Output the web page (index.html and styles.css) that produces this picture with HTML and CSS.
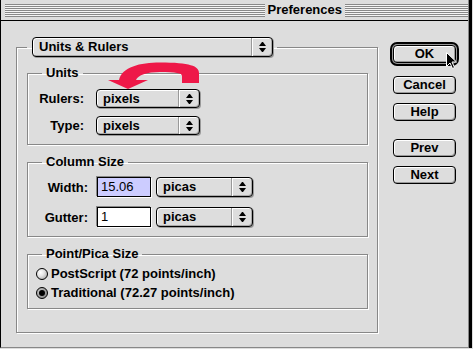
FILE: index.html
```html
<!DOCTYPE html>
<html lang="en">
<head>
  <meta charset="UTF-8">
  <title>Preferences</title>
  <link rel="stylesheet" href="styles.css">
</head>
<body>

  <div class="window">
    <div class="titlebar">
      <div class="stripes"></div>
      <span class="title">Preferences</span>
      <div class="stripes stripes-right"></div>
    </div>

    <div class="content">
      <fieldset class="panel">
        <legend class="panel-legend">
          <div class="popup popup-section">
            <span class="popup-label">Units &amp; Rulers</span>
            <span class="popup-arrows"><i class="tri-up"></i><i class="tri-down"></i></span>
          </div>
        </legend>

        <fieldset class="group group-units">
          <legend>Units</legend>
          <div class="row">
            <label class="row-label">Rulers:</label>
            <div class="popup popup-unit">
              <span class="popup-label">pixels</span>
              <span class="popup-arrows"><i class="tri-up"></i><i class="tri-down"></i></span>
            </div>
          </div>
          <div class="row">
            <label class="row-label">Type:</label>
            <div class="popup popup-unit">
              <span class="popup-label">pixels</span>
              <span class="popup-arrows"><i class="tri-up"></i><i class="tri-down"></i></span>
            </div>
          </div>
        </fieldset>

        <fieldset class="group group-columns">
          <legend>Column Size</legend>
          <div class="row">
            <label class="row-label col-label">Width:</label>
            <div class="field field-selected">15.06</div>
            <div class="popup popup-picas">
              <span class="popup-label">picas</span>
              <span class="popup-arrows"><i class="tri-up"></i><i class="tri-down"></i></span>
            </div>
          </div>
          <div class="row">
            <label class="row-label col-label">Gutter:</label>
            <div class="field">1</div>
            <div class="popup popup-picas">
              <span class="popup-label">picas</span>
              <span class="popup-arrows"><i class="tri-up"></i><i class="tri-down"></i></span>
            </div>
          </div>
        </fieldset>

        <fieldset class="group group-points">
          <legend>Point/Pica Size</legend>
          <div class="radio-row">
            <span class="radio"></span>
            <span>PostScript (72 points/inch)</span>
          </div>
          <div class="radio-row">
            <span class="radio checked"></span>
            <span>Traditional (72.27 points/inch)</span>
          </div>
        </fieldset>
      </fieldset>

      <div class="buttons">
        <div class="btn btn-default">OK</div>
        <div class="btn btn-cancel">Cancel</div>
        <div class="btn btn-help">Help</div>
        <div class="btn btn-prev">Prev</div>
        <div class="btn btn-next">Next</div>
      </div>
    </div>

    <!-- red hint arrow over the Units group -->
    <svg class="swoosh" width="105" height="35" viewBox="100 58 105 35">
      <path d="M182 83 L199 83 L199 73 C199 66 190 62.5 160 62.5 C140 62.5 122 67 119 80 L108 80 L128 89 L148 80 L136 80 C138 75 147 72 160 72 C176 72 182 73 182 76 Z" fill="#ee1848"/>
    </svg>

    <svg class="cursor" width="12" height="18" viewBox="0 0 12 18">
      <path d="M0.5 0.5 L0.5 14.5 L4 11 L6.5 16.5 L8.5 15.5 L6 10 L10.5 10 Z" fill="#000" stroke="#fff" stroke-width="1"/>
    </svg>
  </div>

</body>
</html>
```

FILE: styles.css
```css
html, body {
  margin: 0;
  background-color: #dddddd;
}

body {
  font-family: "Liberation Sans", Arial, sans-serif;
  font-size: 13px;
  font-weight: bold;
  color: #000;
}

.window {
  position: relative;
  width: 469px;
  height: 348px;
  box-sizing: border-box;
  background-color: #dddddd;
  border-left: 1px solid #000;
  border-right: 1px solid #888;
  border-bottom: 1px solid #888;
  box-shadow: 3px 0 0 #000;
}

/* title bar */
.titlebar {
  display: flex;
  height: 21px;
  box-sizing: border-box;
  padding: 4px 0 0 4px;
  border-bottom: 1px solid #000;
  background-color: #dddddd;
}

.stripes {
  flex: 1;
  height: 13px;
  background: repeating-linear-gradient(#888 0 1px, #f4f4f4 1px 2px);
}

.stripes-right {
  flex: none;
  width: 123px;
}

.title {
  margin: -3px 3px 0 3px;
  line-height: 17px;
  font-size: 13px;
}

/* main area */
.content {
  display: flex;
  align-items: flex-start;
  padding: 16px 0 0 15px;
}

fieldset {
  margin: 0;
  min-width: 0;
  box-sizing: border-box;
  border: 1px solid #888;
  box-shadow: 1px 1px 0 #fff, inset 1px 1px 0 #fff;
}

legend {
  padding: 0 4px;
}

.panel {
  width: 362px;
  padding: 8px 9px 23px 10px;
}

.panel-legend {
  padding: 0 4px 0 5px;
}

.group {
  width: 341px;
  padding: 0 0 9px 8px;
  margin-bottom: 9px;
}

.group legend {
  margin-left: 6px;
  line-height: 16px;
}

.group-units .row:first-of-type {
  margin-top: 8px;
}

.group-units .row + .row {
  margin-top: 8px;
}

.group-columns .row {
  height: 20px;
}

.group-columns .row:first-of-type {
  margin-top: 7px;
}

.group-columns .row + .row {
  margin-top: 10px;
}

.group-points {
  margin-bottom: 0;
  padding-top: 2px;
  padding-bottom: 6px;
}

.row {
  display: flex;
  align-items: center;
}

.row-label {
  width: 48px;
  margin-right: 12px;
  text-align: right;
}

.col-label {
  width: 52px;
  margin-right: 9px;
}

/* popup menus */
.popup {
  display: flex;
  height: 19px;
  box-sizing: border-box;
  border: 1px solid #000;
  border-radius: 4px;
  background-color: #dddddd;
  box-shadow: inset 1px 1px 0 #fff, inset -1px -1px 0 #aaa, 1px 1px 0 #999;
}

.popup-section {
  width: 241px;
  height: 20px;
}

.popup-unit {
  width: 104px;
}

.popup-picas {
  width: 97px;
  height: 20px;
  margin-left: 5px;
}

.popup-label {
  flex: 1;
  padding-left: 6px;
  line-height: 17px;
  white-space: nowrap;
}

.popup-section .popup-label {
  line-height: 18px;
}

.popup-arrows {
  width: 20px;
  display: flex;
  flex-direction: column;
  align-items: center;
  justify-content: center;
  gap: 2px;
  border-left: 1px solid #999;
  box-shadow: inset 1px 0 0 #fff;
}

.tri-up,
.tri-down {
  width: 1px;
  height: 0;
  border-left: 3px solid transparent;
  border-right: 3px solid transparent;
}

.tri-up {
  border-bottom: 4px solid #000;
}

.tri-down {
  border-top: 4px solid #000;
}

/* text fields */
.field {
  width: 54px;
  height: 20px;
  box-sizing: border-box;
  padding-left: 3px;
  border: 1px solid #000;
  background-color: #fff;
  box-shadow: -1px -1px 0 #888, 1px 1px 0 #fff;
  font-weight: normal;
  line-height: 18px;
}

.field-selected {
  background-color: #ccccff;
}

/* radio buttons */
.radio-row {
  display: flex;
  align-items: center;
  height: 19px;
  gap: 3px;
}

.radio {
  position: relative;
  width: 12px;
  height: 12px;
  box-sizing: border-box;
  border: 1px solid #000;
  border-radius: 50%;
  background: radial-gradient(circle at 35% 35%, #fff 0, #e4e4e4 40%, #999 100%);
}

.radio.checked {
  background: radial-gradient(circle at 35% 35%, #ccc 0, #777 100%);
}

.radio.checked::after {
  content: "";
  position: absolute;
  left: 2px;
  top: 2px;
  width: 6px;
  height: 6px;
  border-radius: 50%;
  background-color: #000;
}

/* dialog buttons */
.buttons {
  display: flex;
  flex-direction: column;
  margin: 8px 0 0 15px;
}

.btn {
  width: 63px;
  height: 18px;
  box-sizing: border-box;
  border: 1px solid #000;
  border-radius: 4px;
  background-color: #dddddd;
  box-shadow: inset 1px 1px 0 #fff, inset -1px -1px 0 #999;
  text-align: center;
  line-height: 16px;
}

.btn-default {
  box-shadow: inset 1px 1px 0 #fff, inset -1px -1px 0 #999, 0 0 0 1px #999, 0 0 0 3px #000;
}

.btn-cancel {
  margin-top: 13px;
}

.btn-help {
  margin-top: 9px;
}

.btn-prev {
  margin-top: 18px;
}

.btn-next {
  margin-top: 9px;
}

/* overlays */
.swoosh {
  position: absolute;
  left: 99px;
  top: 58px;
}

.cursor {
  position: absolute;
  left: 445px;
  top: 52px;
}
```
